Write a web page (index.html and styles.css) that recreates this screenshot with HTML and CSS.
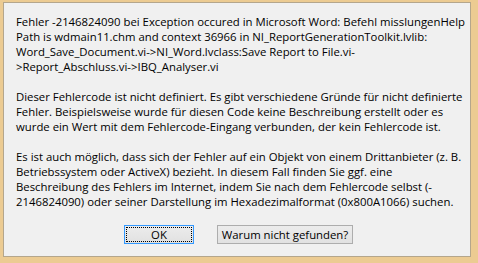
FILE: index.html
```html
<!DOCTYPE html>
<html lang="de">
<head>
  <meta charset="UTF-8">
  <title>Fehler</title>
  <link rel="stylesheet" href="styles.css">
</head>
<body>
  <div class="frame">
    <div class="dialog">
      <div class="message">
        <p>Fehler -2146824090 bei Exception occured in Microsoft Word: Befehl misslungenHelp<br>Path is wdmain11.chm and context 36966 in NI_ReportGenerationToolkit.lvlib:<br>Word_Save_Document.vi-&gt;NI_Word.lvclass:Save Report to File.vi-<br>&gt;Report_Abschluss.vi-&gt;IBQ_Analyser.vi</p>
        <p>Dieser Fehlercode ist nicht definiert. Es gibt verschiedene Gründe für nicht definierte<br>Fehler. Beispielsweise wurde für diesen Code keine Beschreibung erstellt oder es<br>wurde ein Wert mit dem Fehlercode-Eingang verbunden, der kein Fehlercode ist.</p>
        <p>Es ist auch möglich, dass sich der Fehler auf ein Objekt von einem Drittanbieter (z. B.<br>Betriebssystem oder ActiveX) bezieht. In diesem Fall finden Sie ggf. eine<br>Beschreibung des Fehlers im Internet, indem Sie nach dem Fehlercode selbst (-<br>2146824090) oder seiner Darstellung im Hexadezimalformat (0x800A1066) suchen.</p>
      </div>
      <div class="buttons">
        <button class="btn btn-default"><span class="focus">OK</span></button>
        <button class="btn btn-wide">Warum nicht gefunden?</button>
      </div>
    </div>
  </div>
</body>
</html>
```

FILE: styles.css
```css
html, body {
  margin: 0;
  height: 100%;
}

body {
  background: #eccb92;
  font-family: "Open Sans", "Noto Sans", sans-serif;
  font-size: 11.35px;
  color: #000;
}

.frame {
  height: 263px;
  box-sizing: border-box;
  padding: 2px 7px 6px 3px;
}

.dialog {
  height: 100%;
  box-sizing: border-box;
  background: #f0f0f0;
  border: 1px solid #b4a68c;
  padding: 11px 0 0 12px;
  display: flex;
  flex-direction: column;
}

.message p {
  margin: 0 0 15px 0;
  line-height: 15px;
  white-space: nowrap;
}

.message p:last-child {
  margin-bottom: 0;
}

.buttons {
  display: flex;
  gap: 23px;
  margin-top: 16px;
  padding-left: 108px;
}

.btn {
  height: 19px;
  box-sizing: border-box;
  padding: 0;
  font-family: inherit;
  font-size: 11.35px;
  color: #000;
  background: linear-gradient(#ececec, #e1e1e1);
  border: 1px solid #adadad;
  border-radius: 0;
}

.btn-default {
  width: 70px;
  border-color: #3399ff;
  padding: 1px;
}

.btn-default .focus {
  display: block;
  height: 100%;
  box-sizing: border-box;
  border: 1px dotted #000;
  line-height: 13px;
}

.btn-wide {
  width: 136px;
  line-height: 17px;
}
```
